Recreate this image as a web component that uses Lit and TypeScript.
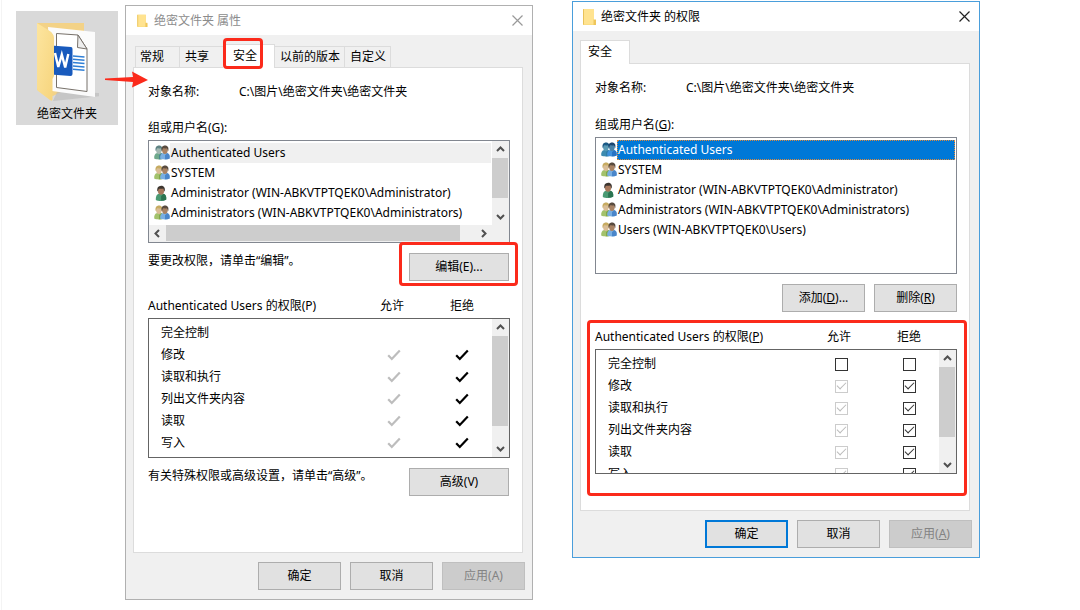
import { LitElement, html, svg, css, nothing } from "lit";
import { customElement, property } from "lit/decorators.js";

type Account = { name: string; kind: "group" | "world" | "single" };
type Grant = { name: string; allow: boolean; deny: boolean };

const HOST = "WIN-ABKVTPTQEK0";

const ACCOUNTS: Account[] = [
  { name: "Authenticated Users", kind: "world" },
  { name: "SYSTEM", kind: "group" },
  { name: `Administrator (${HOST}\\Administrator)`, kind: "single" },
  { name: `Administrators (${HOST}\\Administrators)`, kind: "group" },
  { name: `Users (${HOST}\\Users)`, kind: "group" },
];

const GRANTS: Grant[] = [
  { name: "完全控制", allow: false, deny: false },
  { name: "修改", allow: true, deny: true },
  { name: "读取和执行", allow: true, deny: true },
  { name: "列出文件夹内容", allow: true, deny: true },
  { name: "读取", allow: true, deny: true },
  { name: "写入", allow: true, deny: true },
];

const OBJECT_PATH = "C:\\图片\\绝密文件夹\\绝密文件夹";

const person = (x: number, y: number, hair: string, face: string, body: string, shade: string) => svg`
  <g transform="translate(${x} ${y})">
    <path d="M0.2 13.6C0 10 1 8.4 3.2 7.9L6.8 7.9C9.2 8.4 10 10.4 9.6 13.4C7 14.8 2.6 14.8 0.2 13.6Z" fill=${body}/>
    <path d="M5 10.2L7.2 8C9.2 8.6 10 10.4 9.6 13.4C8.2 14 6.6 14.3 5 14.3Z" fill=${shade}/>
    <ellipse cx="4.9" cy="5.2" rx="2.8" ry="3.7" fill=${face}/>
    <path d="M1.7 6C0.9 2.6 2.4 0.7 5 0.6C7.9 0.6 9 2.8 8.2 6.2C7.6 5.4 7.6 4.2 6.8 3.2C5.2 3.7 3.6 3.2 3 3.4C2.4 4.2 2.5 5.4 1.7 6Z" fill=${hair}/>
  </g>`;

const accountIcon = (kind: Account["kind"], selected: boolean) => {
  const front =
    selected
      ? person(6, 0, "#1d466f", "#4c84a8", "#3f92dd", "#2673c4")
      : person(6, 0, "#5a4c40", "#a98364", "#79afe2", "#4a86ca");
  return html`<svg class="account-icon" viewBox="0 0 16 16" aria-hidden="true">
    ${kind === "single"
      ? svg`<g transform="translate(1.6 0) scale(1.1)">${person(0, 0, "#3c352f", "#a8795d", "#4a9a73", "#2b7451")}</g>`
      : kind === "world"
        ? svg`${person(0, 0, selected ? "#1c5a86" : "#5f8384", selected ? "#5b9bb5" : "#a4b8b2", selected ? "#3d8bb0" : "#6fa98c", selected ? "#2f7ca8" : "#4a8792")}${front}`
        : svg`${person(0, 0, "#c6ab62", "#d9bd96", "#a3c26c", "#82a64a")}${front}`}
  </svg>`;
};

const chevron = (dir: "up" | "down" | "left" | "right") => {
  const d = {
    up: "M5 10L8.5 6.5L12 10",
    down: "M5 7L8.5 10.5L12 7",
    left: "M10 5L6.5 8.5L10 12",
    right: "M7 5L10.5 8.5L7 12",
  }[dir];
  return html`<svg class="chevron" viewBox="0 0 17 17" aria-hidden="true"><path d=${d} fill="none" stroke="#505050" stroke-width="2"/></svg>`;
};

const folderIcon = html`<svg class="folder-icon" viewBox="0 0 14 17" aria-hidden="true">
  <path d="M1 1H12V12H14V17H1Z" fill="#f7d774"/>
  <path d="M1 1H12V16.500H1Z" fill="#ffe390"/>
  <path d="M1 1L2 1.5V16.500L1 16.500Z" fill="#e9c25a"/>
  <path d="M11.500 11.500H14V17H11.500Z" fill="#efc65a"/>
</svg>`;

const tickIcon = html`<svg class="tick" viewBox="0 0 14 12" role="img" aria-label="✓"><path d="M1.2 6.2L4.8 10L12.8 1.4" fill="none" stroke="currentColor" stroke-width="2.2"/></svg>`;

const base = css`
  :host {
    display: block;
    font: 12px/16px "Noto Sans", "Noto Sans CJK SC", sans-serif;
    color: #000;
  }
  *, *::before, *::after { box-sizing: border-box; }
  button { font: inherit; color: inherit; }
`;

@customElement("scroll-bar")
class ScrollBar extends LitElement {
  @property({ reflect: true }) orient: "vertical" | "horizontal" = "vertical";
  /** Share of the track that the thumb covers, in percent. */
  @property({ type: Number }) extent = 50;

  static styles = [base, css`
    :host { display: flex; background: #f0f0f0; min-width: 0; min-height: 0; }
    :host([orient="vertical"]) { flex-direction: column; width: 17px; }
    :host([orient="horizontal"]) { height: 17px; }
    .chevron { display: block; width: 17px; height: 17px; flex: none; }
    .track { flex: 1; min-width: 0; min-height: 0; }
    .thumb { background: #cdcdcd; }
    :host([orient="vertical"]) .thumb { width: 16px; }
    :host([orient="horizontal"]) .thumb { height: 16px; }
  `];

  render() {
    const v = this.orient === "vertical";
    return html`${chevron(v ? "up" : "left")}
      <div class="track"><div class="thumb" style=${v ? `height:${this.extent}%` : `width:${this.extent}%`}></div></div>
      ${chevron(v ? "down" : "right")}`;
  }
}

@customElement("account-list")
class AccountList extends LitElement {
  @property({ attribute: false }) accounts: Account[] = [];
  @property({ type: Boolean, reflect: true }) active = false;
  @property({ type: Boolean, reflect: true }) scrolls = false;

  static styles = [base, css`
    :host { display: grid; grid-template-columns: minmax(0, 1fr) auto; grid-template-rows: minmax(0, 1fr) auto; border: 1px solid #828790; background: #fff; height: 137px; }
    :host([scrolls]) { height: 103px; }
    .rows { margin: 0; padding: 2px 1px 0 5px; list-style: none; overflow: hidden; }
    .row { display: flex; align-items: center; height: 20px; }
    .account-icon { width: 16px; height: 16px; flex: none; }
    .name { flex: 1; padding: 0 1px; line-height: 20px; white-space: nowrap; }
    .row[aria-selected="true"] .name { background: #f0f0f0; }
    :host([active]) .row[aria-selected="true"] .name { background: #0078d7; color: #fff; outline: 1px dotted #e08a3c; outline-offset: -1px; }
    .corner { background: #f0f0f0; }
  `];

  render() {
    return html`
      <ul class="rows" role="listbox" aria-label="组或用户名">
        ${this.accounts.map((a, i) => html`<li class="row" role="option" aria-selected=${i === 0 ? "true" : "false"}>
          ${accountIcon(a.kind, this.active && i === 0)}<span class="name">${a.name}</span>
        </li>`)}
      </ul>
      ${this.scrolls
        ? html`<scroll-bar orient="vertical" extent="80"></scroll-bar>
            <scroll-bar orient="horizontal" extent="95"></scroll-bar><div class="corner"></div>`
        : nothing}`;
  }
}

@customElement("grant-table")
class GrantTable extends LitElement {
  @property({ type: Boolean, reflect: true }) editable = false;

  static styles = [base, css`
    :host { display: grid; }
    .table { display: block; grid-area: 1 / 1; }
    .head, .body { display: block; }
    .head-row, .row { display: grid; align-items: center; }
    .head-row { grid-template-columns: minmax(0, 1fr) 70px 70px; padding-right: 13px; margin-bottom: 4px; }
    .head-row th { padding: 0; font-weight: normal; white-space: nowrap; }
    .head-row .subject { text-align: left; }
    .body { height: 140px; border: 1px solid #646464; padding-top: 3px; overflow: hidden; }
    :host([editable]) .body { height: 125px; }
    .row { grid-template-columns: minmax(0, 1fr) 68px 68px; height: 22px; padding: 0 13px 0 12px; }
    .right { font-weight: normal; text-align: left; padding: 0; }
    .cell { display: flex; justify-content: center; padding: 0; color: #000; }
    .allow { color: #bdbdbd; }
    .tick { width: 14px; height: 12px; }
    .box { appearance: none; width: 13px; height: 13px; margin: 0; border: 1px solid #333; background: #fff; display: grid; place-items: center; }
    .box:checked::after { content: ""; width: 9px; height: 5px; margin-bottom: 3px; border: solid #333; border-width: 0 0 1px 1px; transform: rotate(-45deg); }
    .box:disabled { border-color: #ccc; }
    .box:disabled::after { border-color: #bbb; }
    .bar { grid-area: 1 / 1; justify-self: end; margin: 21px 1px 1px 0; }
  `];

  private mark(g: Grant, side: "allow" | "deny") {
    if (!this.editable) return g[side] ? tickIcon : nothing;
    return html`<input class="box" type="checkbox" aria-label="${g.name} ${side === "allow" ? "允许" : "拒绝"}"
      .checked=${g[side]} ?disabled=${side === "allow" && g.allow}>`;
  }

  render() {
    return html`
      <table class="table">
        <thead class="head">
          <tr class="head-row">
            <th class="subject" scope="col">Authenticated Users 的权限(${this.editable ? html`<u>P</u>` : "P"})</th>
            <th scope="col">允许</th>
            <th scope="col">拒绝</th>
          </tr>
        </thead>
        <tbody class="body">
          ${GRANTS.map((g) => html`<tr class="row">
            <th class="right" scope="row">${g.name}</th>
            <td class="cell allow">${this.mark(g, "allow")}</td>
            <td class="cell">${this.mark(g, "deny")}</td>
          </tr>`)}
        </tbody>
      </table>
      <scroll-bar class="bar" orient="vertical" extent=${this.editable ? 79 : 87}></scroll-bar>`;
  }
}

@customElement("app-root")
class AppRoot extends LitElement {
  static styles = [base, css`
    :host { min-height: 100vh; background: #fff; }
    .desk { display: flex; align-items: flex-start; min-height: 100vh; margin-left: 1px; padding: 1px 100px 0 14px; border-left: 1px solid #f4f4f4; }

    .file { position: relative; flex: none; width: 102px; margin: 10px 0 0; padding: 9px 0 3px; background: #d9d9d9; display: grid; justify-items: center; gap: 4px; }
    .file-art { width: 64px; height: 82px; }
    .arrow { position: absolute; left: 89px; top: 60px; width: 43px; height: 18px; z-index: 2; }

    .window { flex: 1 1 0; min-width: 0; display: flex; flex-direction: column; border: 1px solid #b0b0b0; background: #f0f0f0; }
    .properties { margin: 4px 0 0 7px; }
    .permissions { margin-left: 39px; border-color: #4a9edb; }
    .title { display: flex; align-items: center; height: 29px; padding: 0 8px 0 9px; gap: 5px; background: #fff; }
    .properties .title { color: #8c8c8c; }
    .title-text { flex: 1; margin: 0; font: inherit; }
    .folder-icon { width: 14px; height: 17px; }
    .properties .folder-icon { height: 13px; }
    .close { width: 13px; height: 13px; padding: 0; border: 0; background: none; display: grid; place-items: center; }
    .close-icon { width: 11px; height: 11px; }

    .content { padding: 9px 9px 0 7px; }
    .tabs { display: flex; align-items: flex-end; height: 23px; }
    .properties .tabs { padding-left: 2px; }
    .tab { height: 21px; min-width: 45px; padding: 0 4px 0 5px; border: 1px solid #dcdcdc; border-width: 1px 1px 0 0; background: #f0f0f0; text-align: left; white-space: nowrap; }
    .tab:first-child { border-left-width: 1px; padding-left: 4px; }
    .tab[aria-selected="true"] { position: relative; height: 24px; min-width: 52px; margin: 0 0 -1px -2px; padding: 0 16px 2px 10px; background: #fff; z-index: 1; }
    .tab[aria-selected="true"]:first-child { min-width: 50px; margin-left: 0; padding-left: 7px; }
    .panel { border: 1px solid #dcdcdc; background: #fff; padding: 16px 12px 56px 14px; }
    .permissions .panel { padding-bottom: 36px; }

    .object { display: grid; grid-template-columns: 91px minmax(0, 1fr); margin: 0 0 20px; }
    .permissions .object { margin-bottom: 21px; }
    .object dd { margin: 0; }
    .label { margin: 0 0 4px; }
    .hint { display: flex; justify-content: space-between; align-items: flex-start; margin-top: 10px; padding-right: 1px; }
    .hint p { margin: 0; line-height: 16px; }
    .grants { position: relative; margin-top: 17px; }

    .button { height: 28px; width: 83px; padding: 0; border: 1px solid #adadad; background: #e1e1e1; }
    .wide { width: 100px; }
    .button:disabled { background: #ccc; border-color: #bfbfbf; color: #838383; }
    .default { border: 2px solid #0078d7; }
    .actions { display: flex; justify-content: flex-end; gap: 9px; margin-top: 10px; }
    .footer { display: flex; justify-content: flex-end; gap: 9px; padding: 9px 7px; }

    .marked { position: relative; }
    .marked::after { content: ""; position: absolute; border: 3px solid #fb2a1b; border-radius: 4px; pointer-events: none; z-index: 2; }
    .tab.marked::after { inset: -7px 11px -1px 0; }
    .button.marked::after { inset: -12px -10px -6px -11px; }
    .grants.marked::after { inset: -9px -10px -22px -8px; }
  `];

  private title_(text: string, stroke: string) {
    return html`<header class="title">
      ${folderIcon}
      <h2 class="title-text">${text}</h2>
      <button class="close" type="button" aria-label="关闭">
        <svg class="close-icon" viewBox="0 0 11 11" aria-hidden="true"><path d="M0.5 0.5L10.5 10.5M10.5 0.5L0.5 10.5" stroke=${stroke} stroke-width="1.2"/></svg>
      </button>
    </header>`;
  }

  private object_() {
    return html`<dl class="object"><dt>对象名称:</dt><dd>${OBJECT_PATH}</dd></dl>`;
  }

  private file_() {
    return html`<figure class="file">
      <svg class="file-art" viewBox="0 0 64 82" aria-hidden="true">
        <defs>
          <linearGradient id="flap" x1="0" x2="1" y1="0" y2="1">
            <stop offset="0" stop-color="#fde59f"/><stop offset="1" stop-color="#f6d47c"/>
          </linearGradient>
        </defs>
        <path d="M2 3H49V60L18 76L2 70Z" fill="#f3d287"/>
        <path d="M18 81L66 76V73L22 72Z" fill="#b9b9b9" opacity=".6"/>
        <path d="M13 7L60 12V77L17 71Z" fill="#fbfbfb"/>
        <path d="M21.500 13.500L43 15L52 29V71.500L21.500 67.500Z" fill="#fff" stroke="#77716a" stroke-width="1"/>
        <path d="M43 15L42.500 27.500L52 29Z" fill="#eee" stroke="#77716a" stroke-width="1"/>
        <path d="M38 36L49.500 37M38 39.300L49.500 40.300M38 42.600L49.500 43.600M38 45.900L49.500 46.900M38 49.200L49.500 50.200" stroke="#2f7fd6" stroke-width="1.500"/>
        <path d="M16 25.500L36 27Q37.500 27 37.500 29V54Q37.500 56 35.500 56L16 54.500Z" fill="#185abd"/>
        <path d="M20 33L23.300 47L26.800 34.500L30.200 47.500L33.300 34" fill="none" stroke="#fff" stroke-width="2.400"/>
        <path d="M2 3L14 10.500Q19 13.500 19 18V56L17.500 59V79Q17.500 82 15 80L3 71Q2 70 2 68Z" fill="url(#flap)"/>
      </svg>
      <figcaption>绝密文件夹</figcaption>
      <svg class="arrow" viewBox="0 0 43 18" aria-hidden="true"><path d="M0 7.500L28 6L27 0.500L43 9L27 16.500L28 11L0 9Z" fill="#fb2a1b"/></svg>
    </figure>`;
  }

  private properties_() {
    return html`<section class="window properties">
      ${this.title_("绝密文件夹 属性", "#999")}
      <div class="content">
        <div class="tabs" role="tablist">
          ${["常规", "共享", "安全", "以前的版本", "自定义"].map((t) => {
            const on = t === "安全";
            return html`<button type="button" role="tab" class="tab ${on ? "marked" : ""}" aria-selected=${on ? "true" : "false"}>${t}</button>`;
          })}
        </div>
        <div class="panel" role="tabpanel">
          ${this.object_()}
          <p class="label">组或用户名(G):</p>
          <account-list scrolls .accounts=${ACCOUNTS.slice(0, 4)}></account-list>
          <div class="hint"><p>要更改权限，请单击“编辑”。</p><button type="button" class="button wide marked">编辑(E)...</button></div>
          <div class="grants"><grant-table></grant-table></div>
          <div class="hint"><p>有关特殊权限或高级设置，请单击“高级”。</p><button type="button" class="button wide">高级(V)</button></div>
        </div>
      </div>
      <footer class="footer">
        <button type="button" class="button">确定</button>
        <button type="button" class="button">取消</button>
        <button type="button" class="button" disabled>应用(A)</button>
      </footer>
    </section>`;
  }

  private permissions_() {
    return html`<section class="window permissions">
      ${this.title_("绝密文件夹 的权限", "#222")}
      <div class="content">
        <div class="tabs" role="tablist"><button type="button" role="tab" class="tab" aria-selected="true">安全</button></div>
        <div class="panel" role="tabpanel">
          ${this.object_()}
          <p class="label">组或用户名(<u>G</u>):</p>
          <account-list active .accounts=${ACCOUNTS}></account-list>
          <div class="actions">
            <button type="button" class="button">添加(<u>D</u>)...</button>
            <button type="button" class="button">删除(<u>R</u>)</button>
          </div>
          <div class="grants marked"><grant-table editable></grant-table></div>
        </div>
      </div>
      <footer class="footer">
        <button type="button" class="button default">确定</button>
        <button type="button" class="button">取消</button>
        <button type="button" class="button" disabled>应用(<u>A</u>)</button>
      </footer>
    </section>`;
  }

  render() {
    return html`<main class="desk">${this.file_()}${this.properties_()}${this.permissions_()}</main>`;
  }
}
